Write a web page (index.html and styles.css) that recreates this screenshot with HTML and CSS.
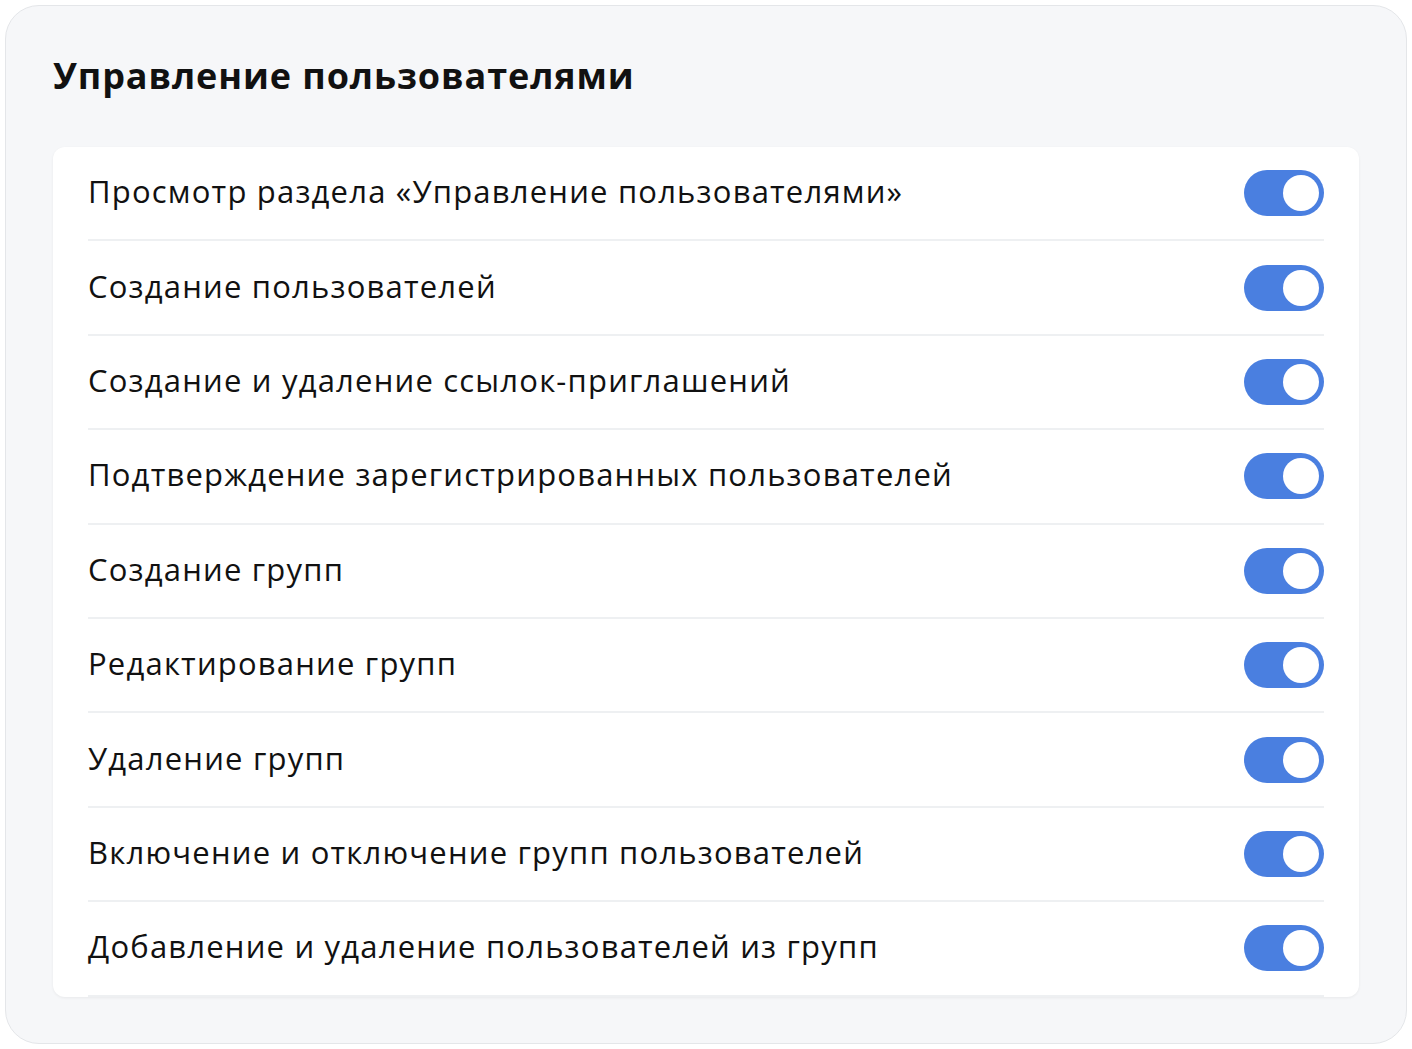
FILE: index.html
```html
<!DOCTYPE html>
<html lang="ru">
<head>
  <meta charset="UTF-8">
  <title>Управление пользователями</title>
  <link rel="stylesheet" href="styles.css">
</head>
<body>

  <!-- Permissions panel -->
  <section class="panel">
    <h2 class="panel__title">Управление пользователями</h2>

    <ul class="perm-list">
      <li class="perm"><span>Просмотр раздела «Управление пользователями»</span><span class="toggle toggle--on"></span></li>
      <li class="perm"><span>Создание пользователей</span><span class="toggle toggle--on"></span></li>
      <li class="perm"><span>Создание и удаление ссылок-приглашений</span><span class="toggle toggle--on"></span></li>
      <li class="perm"><span>Подтверждение зарегистрированных пользователей</span><span class="toggle toggle--on"></span></li>
      <li class="perm"><span>Создание групп</span><span class="toggle toggle--on"></span></li>
      <li class="perm"><span>Редактирование групп</span><span class="toggle toggle--on"></span></li>
      <li class="perm"><span>Удаление групп</span><span class="toggle toggle--on"></span></li>
      <li class="perm"><span>Включение и отключение групп пользователей</span><span class="toggle toggle--on"></span></li>
      <li class="perm"><span>Добавление и удаление пользователей из групп</span><span class="toggle toggle--on"></span></li>
    </ul>
  </section>

</body>
</html>
```

FILE: styles.css
```css
body {
  margin: 0;
  background: #fff;
  font-family: "Open Sans", Lato, sans-serif;
  color: #111;
}

.panel {
  margin: 5px;
  height: 1039px;
  box-sizing: border-box;
  background: #f6f7f9;
  border: 1px solid #e4e6e9;
  border-radius: 34px;
  padding: 46px 47px;
}

.panel__title {
  margin: 0;
  font-size: 36px;
  font-weight: 700;
  line-height: 48px;
  letter-spacing: 0.9px;
}

.perm-list {
  list-style: none;
  margin: 47px 0 0;
  padding: 0 35px;
  background: #fff;
  border-radius: 12px;
  box-shadow: 0 1px 3px rgba(0, 0, 0, 0.06);
  overflow: hidden;
}

.perm {
  display: flex;
  justify-content: space-between;
  align-items: center;
  height: 92.4px;
  border-bottom: 2px solid #eef0f2;
  font-size: 31px;
  letter-spacing: 1.2px;
}

.perm span:first-child {
  margin-top: -4px;
}

.toggle {
  position: relative;
  width: 80px;
  height: 46px;
  border-radius: 23px;
  background: #e0e3e7;
}

.toggle--on {
  background: #4a7fe0;
}

.toggle::after {
  content: "";
  position: absolute;
  top: 5px;
  left: 5px;
  width: 36px;
  height: 36px;
  border-radius: 50%;
  background: #fff;
}

.toggle--on::after {
  left: 39px;
}
```
